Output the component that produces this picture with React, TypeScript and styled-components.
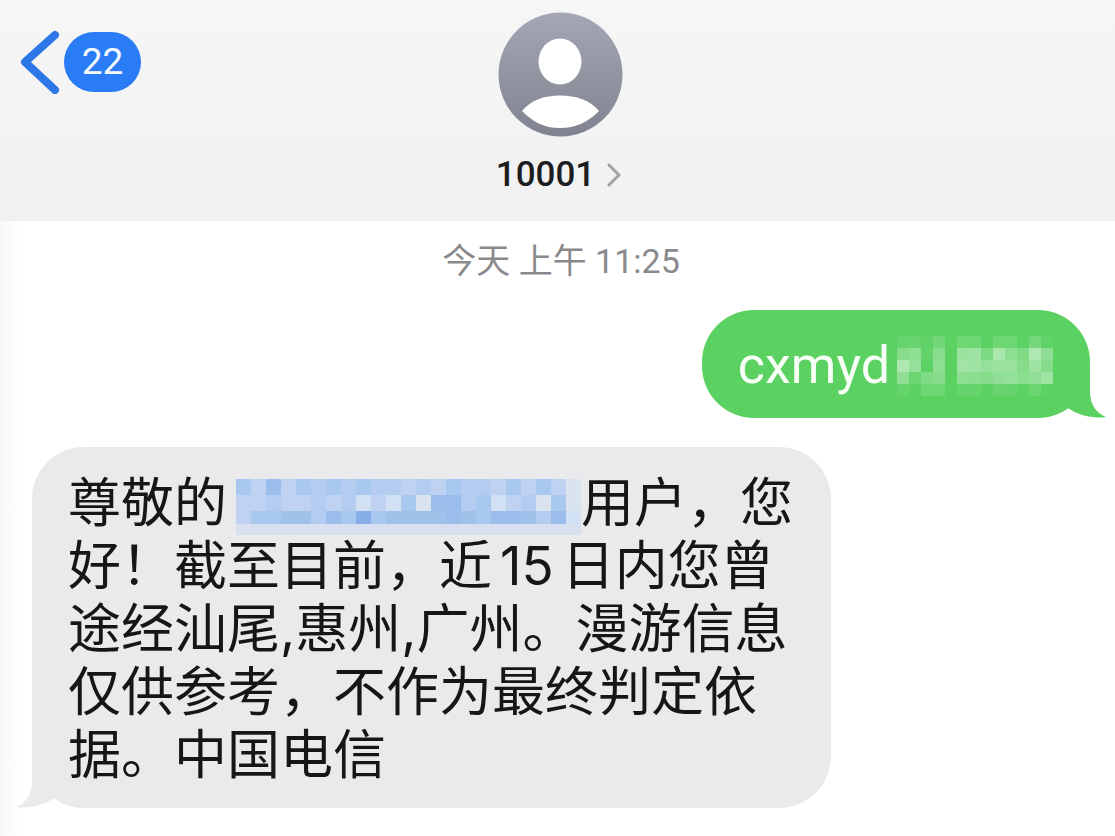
import React from 'react';
import styled, { createGlobalStyle } from 'styled-components';

const GlobalStyle = createGlobalStyle`
  *, *::before, *::after { box-sizing: border-box; }
  body {
    margin: 0;
    background: linear-gradient(to right, #f8f8f8, #ffffff 20px);
    font-family: Roboto, "Noto Sans CJK SC", sans-serif;
    color: #161618;
  }
`;

const Page = styled.main`
  display: flex;
  flex-direction: column;
  min-height: 100vh;
`;

const Header = styled.header`
  display: grid;
  grid-template-columns: 1fr auto 1fr;
  align-items: start;
  padding: 12px 14px 24px 20px;
  background: linear-gradient(to bottom, #f6f6f7, #f1f1f2);
`;

const BackButton = styled.button`
  display: flex;
  align-items: center;
  justify-self: start;
  gap: 4px;
  margin-top: 18px;
  padding: 0;
  border: 0;
  background: none;
  font: inherit;
  cursor: pointer;
`;

const UnreadBadge = styled.span`
  min-width: 77px;
  padding: 0 16px;
  border-radius: 30px;
  background: #2a7bf6;
  color: #f4f9ff;
  font-size: 37px;
  line-height: 60px;
  text-align: center;
`;

const Contact = styled.button`
  display: flex;
  flex-direction: column;
  align-items: center;
  gap: 16px;
  padding: 0;
  border: 0;
  background: none;
  color: #1d1d1f;
  font: inherit;
  cursor: pointer;
`;

const ContactName = styled.span`
  display: flex;
  align-items: center;
  gap: 12px;
  padding-right: 4px;
  font-size: 35px;
  font-weight: 500;
  line-height: 44px;
`;

const Thread = styled.section`
  display: flex;
  flex-direction: column;
  padding: 18px 25px 28px 32px;
`;

const Timestamp = styled.time`
  align-self: center;
  color: #8a8a8d;
  font-size: 34px;
  line-height: 44px;
`;

const Bubble = styled.div<{ $sent?: boolean }>`
  position: relative;
  align-self: ${(p) => (p.$sent ? 'flex-end' : 'flex-start')};
  max-width: 799px;
  margin-top: ${(p) => (p.$sent ? '27px' : '29px')};
  padding: 25px 36px 21px;
  border-radius: 52px;
  background: ${(p) => (p.$sent ? '#5bd162' : '#eaeaec')};
  color: ${(p) => (p.$sent ? '#f7fff7' : 'inherit')};
  font-family: ${(p) => (p.$sent ? 'Roboto' : 'Inter')}, "Noto Sans CJK SC", sans-serif;
  font-size: ${(p) => (p.$sent ? '52px' : '53px')};
  line-height: ${(p) => (p.$sent ? '62px' : '63px')};
`;

const Tail = styled.svg<{ $sent?: boolean }>`
  position: absolute;
  bottom: 0;
  ${(p) => (p.$sent ? 'right: -16px;' : 'left: -16px; transform: scaleX(-1);')}
  fill: ${(p) => (p.$sent ? '#5bd162' : '#eaeaec')};
`;

const Message = styled.p`
  margin: 0;
`;

const Count = styled.span`
  margin: 0 8px;
`;

const SentMosaic = styled.svg`
  margin: 1px 0 1px 6px;
  vertical-align: top;
`;

const NumberMosaic = styled.svg`
  margin: 7px 0 -8px 9px;
  vertical-align: top;
`;

const sentCells = [
  [8, 10, 4, 16, 0, 14, 14, 2, 14, 14, 2, 18, 4],
  [30, 36, 6, 32, 0, 45, 48, 24, 55, 36, 26, 58, 36],
  [58, 40, 2, 36, 0, 50, 48, 40, 44, 44, 30, 48, 30],
  [38, 12, 26, 30, 0, 36, 34, 30, 38, 40, 34, 38, 48],
  [8, 2, 14, 14, 0, 8, 8, 2, 10, 8, 2, 12, 2],
];

const blues: Record<string, string> = {
  a: '#a9c8f0',
  b: '#b5ccf1',
  c: '#c0d2f1',
  d: '#d1e1f3',
  e: '#dae4ef',
  f: '#9bbdec',
  g: '#a0c2ea',
  h: '#88aee8',
  l: '#d8e0ef',
};

const numberRows = [
  { y: 0, h: 16, cells: 'acfcabababbcbcabbcacace' },
  { y: 16, h: 16, cells: 'ccbccbcbdcdaeffbadcbeae' },
  { y: 32, h: 13, cells: 'caaggbfahaggggfgaffgbfd' },
  { y: 45, h: 11, cells: 'lllllllllllllllllllllll' },
];

function HiddenCode() {
  return (
    <SentMosaic width="158" height="60" viewBox="0 0 158 60" shapeRendering="crispEdges" aria-hidden="true">
      {sentCells.map((row, y) =>
        row.map((v, x) => (
          <rect key={`${x}-${y}`} x={1 + x * 12} y={y * 12} width="12" height="12" fill="#d4f2d6" opacity={v / 85} />
        )),
      )}
    </SentMosaic>
  );
}

function HiddenNumber() {
  return (
    <NumberMosaic width="345" height="56" viewBox="0 0 345 56" shapeRendering="crispEdges" aria-hidden="true">
      {numberRows.map((row) =>
        row.cells
          .split('')
          .map((c, x) => <rect key={`${x}-${row.y}`} x={x * 15} y={row.y} width="15" height={row.h} fill={blues[c]} />),
      )}
    </NumberMosaic>
  );
}

function BubbleTail({ sent }: { sent?: boolean }) {
  return (
    <Tail $sent={sent} width="60" height="70" viewBox="0 0 60 70" aria-hidden="true">
      <path d="M44 18V46C45 57 50 65 60 69C46 71 32 67 22 60V20Z" />
    </Tail>
  );
}

function Avatar() {
  return (
    <svg width="125" height="125" viewBox="0 0 125 125" aria-hidden="true">
      <defs>
        <linearGradient id="avatarFill" x1="0" y1="0" x2="0" y2="1">
          <stop offset="0" stopColor="#a3a6b4" />
          <stop offset="1" stopColor="#80838f" />
        </linearGradient>
      </defs>
      <circle cx="62.5" cy="62.5" r="62" fill="url(#avatarFill)" />
      <ellipse cx="62" cy="49.5" rx="21.5" ry="23" fill="#fff" />
      <path d="M24 99C33 88 46 83.500 62 83.500S92 88 101 99C90 110 78 116 62 116S35 110 24 99Z" fill="#fff" />
    </svg>
  );
}

export default function App() {
  return (
    <>
      <GlobalStyle />
      <Page>
        <Header>
          <BackButton type="button" aria-label="返回，22 条未读">
            <svg width="40" height="64" viewBox="0 0 40 64" fill="none" aria-hidden="true">
              <path d="M35 5L5 32L35 60" stroke="#2d78e6" strokeWidth="8" strokeLinecap="round" strokeLinejoin="round" />
            </svg>
            <UnreadBadge>22</UnreadBadge>
          </BackButton>
          <Contact type="button">
            <Avatar />
            <ContactName>
              10001
              <svg width="14" height="24" viewBox="0 0 14 24" fill="none" aria-hidden="true">
                <path d="M2 2L12 12L2 22" stroke="#a2a2a5" strokeWidth="3" strokeLinecap="round" />
              </svg>
            </ContactName>
          </Contact>
        </Header>
        <Thread>
          <Timestamp>今天 上午 11:25</Timestamp>
          <Bubble $sent>
            <BubbleTail sent />
            <Message>
              cxmyd
              <HiddenCode />
            </Message>
          </Bubble>
          <Bubble>
            <BubbleTail />
            <Message>
              尊敬的
              <HiddenNumber />
              用户，您好！截至目前，近<Count>15</Count>日内您曾途经汕尾,惠州,广州。漫游信息仅供参考，不作为最终判定依据。中国电信
            </Message>
          </Bubble>
        </Thread>
      </Page>
    </>
  );
}
